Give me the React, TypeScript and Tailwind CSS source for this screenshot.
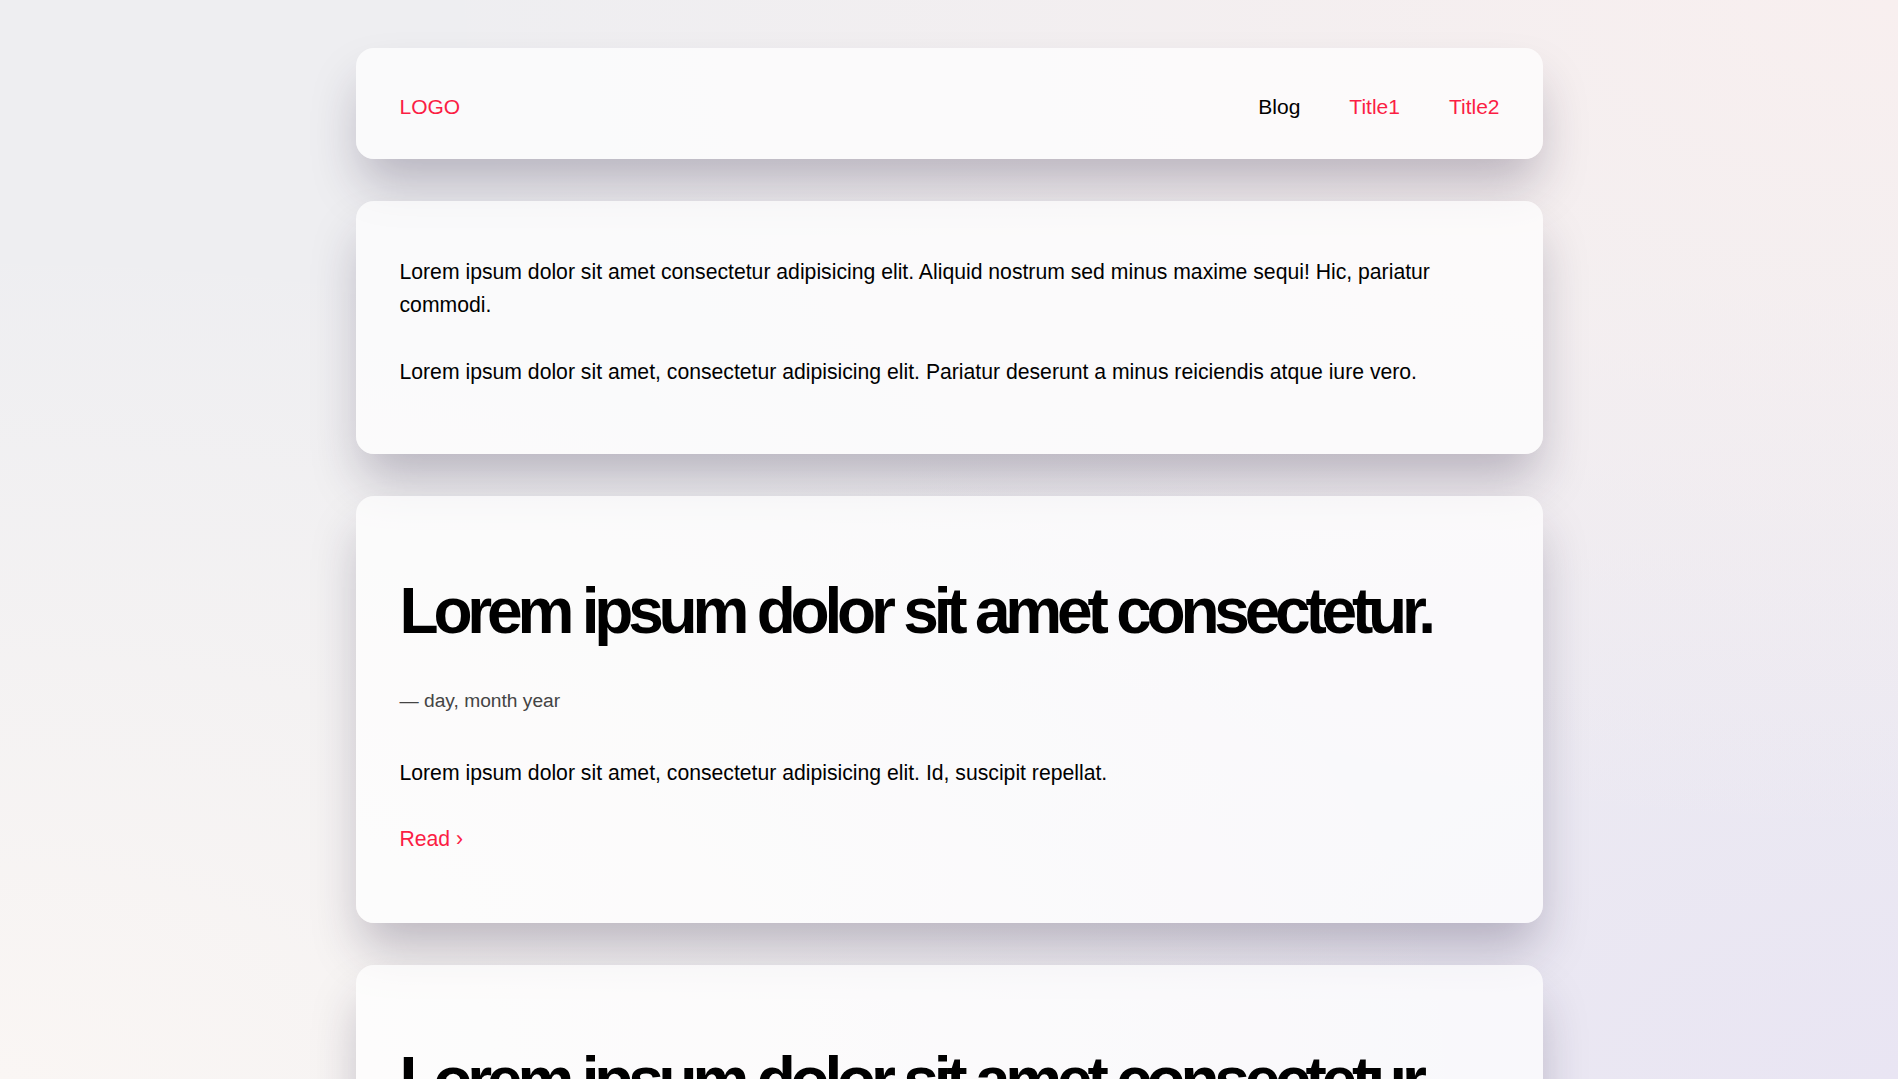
const posts = [
  {
    title: "Lorem ipsum dolor sit amet consectetur.",
    date: "— day, month year",
    text: "Lorem ipsum dolor sit amet, consectetur adipisicing elit. Id, suscipit repellat.",
  },
  {
    title: "Lorem ipsum dolor sit amet consectetur.",
    date: "— day, month year",
    text: "Lorem ipsum dolor sit amet, consectetur adipisicing elit. Id, suscipit repellat.",
  },
];

const card =
  "w-[1187px] rounded-[18px] bg-white/70 pl-[44px] pr-[43px] shadow-[0_30px_50px_-6px_rgba(40,30,60,0.28)]";

export default function App() {
  return (
    <div className="min-h-screen bg-fixed bg-[radial-gradient(at_100%_0%,#f8efef_0,transparent_55%),radial-gradient(at_0%_100%,#faf6f4_0,transparent_55%),radial-gradient(at_100%_100%,#e9e5f3_0,transparent_55%),linear-gradient(#eeeef1,#eeeef1)] font-['Liberation_Sans',Arial,sans-serif] text-black">
      <div className="flex flex-col items-center gap-[42px] pt-[48px] pb-[60px]">
        {/* header */}
        <header className={`${card} flex items-start justify-between pt-[42px] pb-[35px]`}>
          <a href="#" className="text-[21px] leading-[33.6px] text-[#fb1d44]">
            LOGO
          </a>
          <nav className="flex gap-[49px] text-[21px] leading-[33.6px]">
            <a href="#" className="text-black">Blog</a>
            <a href="#" className="text-[#fb1d44]">Title1</a>
            <a href="#" className="text-[#fb1d44]">Title2</a>
          </nav>
        </header>

        {/* intro */}
        <section className={`${card} flex flex-col gap-[33px] pt-[54px] pb-[66px] text-[21.2px] leading-[33.6px]`}>
          <p>
            Lorem ipsum dolor sit amet consectetur adipisicing elit. Aliquid nostrum sed minus
            maxime sequi! Hic, pariatur commodi.
          </p>
          <p>
            Lorem ipsum dolor sit amet, consectetur adipisicing elit. Pariatur deserunt a minus
            reiciendis atque iure vero.
          </p>
        </section>

        {posts.map((p, i) => (
          <article key={i} className={`${card} flex flex-col pt-[80px] pb-[67px]`}>
            <h1 className="text-[64px] font-bold leading-[1.1] tracking-[-5.2px]">{p.title}</h1>
            <div className="mt-[39px] text-[19.2px] leading-[30px] text-[#444]">{p.date}</div>
            <p className="mt-[40px] text-[21.2px] leading-[33.6px]">{p.text}</p>
            <a href="#" className="mt-[33px] text-[21.2px] leading-[33.6px] text-[#fb1d44]">
              Read ›
            </a>
          </article>
        ))}
      </div>
    </div>
  );
}
